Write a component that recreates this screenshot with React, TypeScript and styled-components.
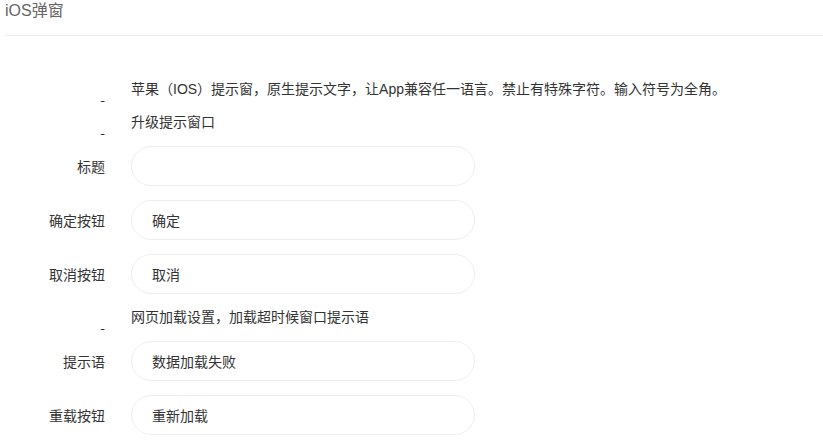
import React from "react";
import styled, { createGlobalStyle } from "styled-components";

const Global = createGlobalStyle`
  html, body { margin: 0; padding: 0; background: #fff; }
  body { font-family: "Noto Sans CJK SC", "Liberation Sans", sans-serif; color: #333; }
`;

const Page = styled.div`
  padding: 0 0 0 5px;
`;

const Header = styled.div`
  font-size: 16px;
  line-height: 22px;
  color: #666;
  height: 36px;
  border-bottom: 1px solid #eee;
  box-sizing: border-box;
  font-family: "Liberation Sans", "Noto Sans CJK SC", sans-serif;
`;

const Form = styled.div`
  display: flex;
  flex-direction: column;
  gap: 14px;
  padding-top: 44px;
`;

const Row = styled.div`
  display: grid;
  grid-template-columns: 100px 344px;
  column-gap: 26px;
  align-items: center;
`;

const Label = styled.div<{ $dash?: boolean }>`
  text-align: right;
  font-size: 14px;
  color: #333;
  white-space: nowrap;
  line-height: ${(p) => (p.$dash ? "39px" : "20px")};
  height: ${(p) => (p.$dash ? "19px" : "auto")};
  align-self: ${(p) => (p.$dash ? "start" : "center")};
`;

const Desc = styled.div`
  font-size: 14px;
  line-height: 19px;
  color: #333;
  white-space: nowrap;
  font-family: "Liberation Sans", "Noto Sans CJK SC", sans-serif;
`;

const Input = styled.input`
  box-sizing: border-box;
  width: 344px;
  height: 40px;
  border: 1px solid #eee;
  border-radius: 20px;
  padding: 0 20px;
  font-size: 14px;
  color: #333;
  font-family: "Noto Sans CJK SC", "Liberation Sans", sans-serif;
  outline: none;
  background: #fff;
`;

type Item =
  | { kind: "desc"; text: string }
  | { kind: "input"; label: string; value: string };

const items: Item[] = [
  { kind: "desc", text: "苹果（IOS）提示窗，原生提示文字，让App兼容任一语言。禁止有特殊字符。输入符号为全角。" },
  { kind: "desc", text: "升级提示窗口" },
  { kind: "input", label: "标题", value: "" },
  { kind: "input", label: "确定按钮", value: "确定" },
  { kind: "input", label: "取消按钮", value: "取消" },
  { kind: "desc", text: "网页加载设置，加载超时候窗口提示语" },
  { kind: "input", label: "提示语", value: "数据加载失败" },
  { kind: "input", label: "重载按钮", value: "重新加载" },
];

export default function App() {
  return (
    <Page>
      <Global />
      <Header>iOS弹窗</Header>
      <Form>
        {items.map((it, i) =>
          it.kind === "desc" ? (
            <Row key={i}>
              <Label $dash>-</Label>
              <Desc>{it.text}</Desc>
            </Row>
          ) : (
            <Row key={i}>
              <Label>{it.label}</Label>
              <Input defaultValue={it.value} readOnly />
            </Row>
          )
        )}
      </Form>
    </Page>
  );
}
